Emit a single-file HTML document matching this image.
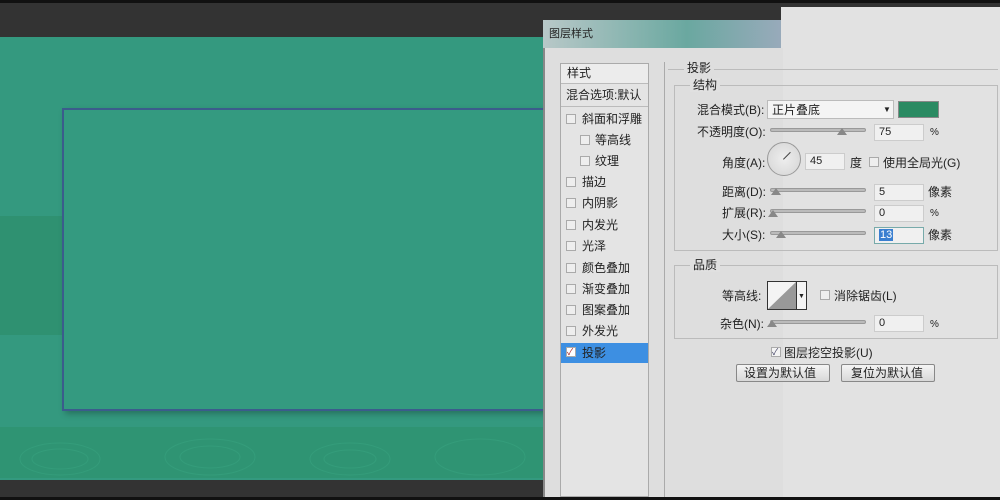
<!DOCTYPE html>
<html><head><meta charset="utf-8"><style>
*{margin:0;padding:0;box-sizing:border-box}
body{width:1000px;height:500px;overflow:hidden;background:#111;position:relative;font-family:"Liberation Sans","Noto Sans CJK SC",sans-serif;font-size:12px;color:#222}
.a{position:absolute}
.t{position:absolute;white-space:nowrap;font-size:12px;line-height:14px}
.cb{position:absolute;width:10px;height:10px;border:1px solid #aaa;background:#eee}
.slider{position:absolute;height:4px;background:#bbb;border:1px solid #999;border-radius:2px}
.inp{position:absolute;height:17px;background:#f0f0f0;border:1px solid #ccc;font-size:11px;padding-left:4px;line-height:15px}
.thumb{position:absolute;width:0;height:0;border-left:5px solid transparent;border-right:5px solid transparent;border-bottom:7px solid #888}
</style></head><body>
<div class="a" style="left:0;top:3px;width:1000px;height:34px;background:#333"></div>
<div class="a" style="left:0;top:37px;width:545px;height:443px;background:#34997f"></div>
<div class="a" style="left:0;top:216px;width:62px;height:119px;background:#2f9171"></div>
<div class="a" style="left:0;top:427px;width:545px;height:51px;background:#2f9473"></div>
<svg class="a" style="left:0;top:427px" width="545" height="51"><g fill="none" stroke="#3aa582" stroke-width="1" opacity=".5">
<ellipse cx="60" cy="32" rx="40" ry="16"/><ellipse cx="60" cy="32" rx="28" ry="10"/><ellipse cx="210" cy="30" rx="45" ry="18"/><ellipse cx="210" cy="30" rx="30" ry="11"/><ellipse cx="350" cy="32" rx="40" ry="16"/><ellipse cx="350" cy="32" rx="26" ry="9"/><ellipse cx="480" cy="30" rx="45" ry="18"/></g></svg>
<div class="a" style="left:0;top:480px;width:545px;height:17px;background:#333"></div>
<div class="a" style="left:62px;top:108px;width:484px;height:303px;border:2px solid #3b5c8c;border-right:none;background:#349a80;box-shadow:3px 3px 6px rgba(0,0,0,.25)"></div>
<div class="a" style="left:543px;top:20px;width:457px;height:477px;background:#dedede;border-left:2px solid #888"></div>
<div class="a" style="left:543px;top:20px;width:240px;height:28px;background:linear-gradient(90deg,#b8c8c8,#6aa8a0 60%,#9ab)"></div>
<div class="t" style="left:549px;top:27px;font-size:11px">图层样式</div>
<div class="a" style="left:781px;top:7px;width:219px;height:490px;background:#e2e2e2"></div>
<div class="a" style="left:548px;top:48px;width:235px;height:449px;background:#dedede"></div>
<div class="a" style="left:560px;top:63px;width:89px;height:434px;background:#e4e4e4;border:1px solid #aaa"></div>
<div class="a" style="left:561px;top:64px;width:87px;height:20px;background:#ececec;border-bottom:1px solid #bbb"></div>
<div class="t" style="left:567px;top:66px">样式</div>
<div class="a" style="left:561px;top:85px;width:87px;height:22px;border-bottom:1px solid #bbb"></div>
<div class="t" style="left:566px;top:88px">混合选项:默认</div>
<div class="cb" style="left:566px;top:114px"></div><div class="t" style="left:582px;top:112px">斜面和浮雕</div>
<div class="cb" style="left:580px;top:135px"></div><div class="t" style="left:595px;top:133px">等高线</div>
<div class="cb" style="left:580px;top:156px"></div><div class="t" style="left:595px;top:154px">纹理</div>
<div class="cb" style="left:566px;top:177px"></div><div class="t" style="left:582px;top:175px">描边</div>
<div class="cb" style="left:566px;top:198px"></div><div class="t" style="left:582px;top:196px">内阴影</div>
<div class="cb" style="left:566px;top:220px"></div><div class="t" style="left:582px;top:218px">内发光</div>
<div class="cb" style="left:566px;top:241px"></div><div class="t" style="left:582px;top:239px">光泽</div>
<div class="cb" style="left:566px;top:263px"></div><div class="t" style="left:582px;top:261px">颜色叠加</div>
<div class="cb" style="left:566px;top:284px"></div><div class="t" style="left:582px;top:282px">渐变叠加</div>
<div class="cb" style="left:566px;top:305px"></div><div class="t" style="left:582px;top:303px">图案叠加</div>
<div class="cb" style="left:566px;top:326px"></div><div class="t" style="left:582px;top:324px">外发光</div>
<div class="a" style="left:561px;top:343px;width:87px;height:20px;background:#3d8fe2"></div>
<div class="cb" style="left:566px;top:347px;background:#fff;font-size:9px;line-height:8px;color:#a22">✓</div><div class="t" style="left:582px;top:346px">投影</div>
<div class="a" style="left:664px;top:62px;width:1px;height:435px;background:#aaa"></div>
<div class="a" style="left:668px;top:69px;width:330px;height:1px;background:#bbb"></div>
<div class="t" style="left:684px;top:61px;background:#dedede;padding:0 3px">投影</div>
<div class="a" style="left:674px;top:85px;width:324px;height:166px;border:1px solid #bbb"></div>
<div class="t" style="left:690px;top:78px;background:#e0e0e0;padding:0 3px">结构</div>
<div class="t" style="left:697px;top:103px">混合模式(B):</div>
<div class="a" style="left:767px;top:100px;width:127px;height:19px;background:#f4f4f4;border:1px solid #bbb"></div>
<div class="t" style="left:772px;top:103px">正片叠底</div><div class="t" style="left:883px;top:103px;font-size:8px">▼</div>
<div class="a" style="left:898px;top:101px;width:41px;height:17px;background:#2a8a62;border:1px solid #888"></div>
<div class="t" style="left:697px;top:125px">不透明度(O):</div>
<div class="slider" style="left:770px;top:128px;width:96px"></div><div class="thumb" style="left:837px;top:128px"></div>
<div class="inp" style="left:874px;top:124px;width:50px">75</div><div class="t" style="left:930px;top:126px;font-size:10px">%</div>
<div class="t" style="left:722px;top:156px">角度(A):</div>
<div class="a" style="left:767px;top:142px;width:34px;height:34px;border-radius:50%;border:1px solid #999;background:radial-gradient(#eee,#d4d4d4)"></div>
<div class="a" style="left:783px;top:159px;width:10px;height:1px;background:#444;transform:rotate(-45deg);transform-origin:0 0"></div>
<div class="inp" style="left:805px;top:153px;width:40px">45</div><div class="t" style="left:850px;top:156px">度</div>
<div class="cb" style="left:869px;top:157px"></div><div class="t" style="left:883px;top:156px">使用全局光(G)</div>
<div class="t" style="left:722px;top:185px">距离(D):</div>
<div class="slider" style="left:770px;top:188px;width:96px"></div><div class="thumb" style="left:771px;top:188px"></div>
<div class="inp" style="left:874px;top:184px;width:50px">5</div><div class="t" style="left:928px;top:185px">像素</div>
<div class="t" style="left:722px;top:206px">扩展(R):</div>
<div class="slider" style="left:770px;top:209px;width:96px"></div><div class="thumb" style="left:768px;top:210px"></div>
<div class="inp" style="left:874px;top:205px;width:50px">0</div><div class="t" style="left:930px;top:207px;font-size:10px">%</div>
<div class="t" style="left:722px;top:228px">大小(S):</div>
<div class="slider" style="left:770px;top:231px;width:96px"></div><div class="thumb" style="left:776px;top:231px"></div>
<div class="inp" style="left:874px;top:227px;width:50px;border-color:#7aa"><span style="background:#3a7fd0;color:#fff;padding:0 1px">13</span></div><div class="t" style="left:928px;top:228px">像素</div>
<div class="a" style="left:674px;top:265px;width:324px;height:74px;border:1px solid #bbb"></div>
<div class="t" style="left:690px;top:258px;background:#e0e0e0;padding:0 3px">品质</div>
<div class="t" style="left:722px;top:289px">等高线:</div>
<div class="a" style="left:767px;top:281px;width:40px;height:29px;border:1px solid #333;background:#f4f4f4"></div>
<svg class="a" style="left:768px;top:282px" width="28" height="27"><polygon points="0,27 28,0 28,27" fill="#999"/></svg>
<div class="a" style="left:796px;top:282px;width:1px;height:27px;background:#333"></div>
<div class="t" style="left:798px;top:290px;font-size:7px">▼</div>
<div class="cb" style="left:820px;top:290px"></div><div class="t" style="left:834px;top:289px">消除锯齿(L)</div>
<div class="t" style="left:720px;top:317px">杂色(N):</div>
<div class="slider" style="left:770px;top:320px;width:96px"></div><div class="thumb" style="left:767px;top:320px"></div>
<div class="inp" style="left:874px;top:315px;width:50px">0</div><div class="t" style="left:930px;top:318px;font-size:10px">%</div>
<div class="cb" style="left:771px;top:347px;background:#f4f4f4;font-size:9px;line-height:8px;color:#446">✓</div><div class="t" style="left:784px;top:346px">图层挖空投影(U)</div>
<div class="a" style="left:736px;top:364px;width:94px;height:18px;border:1px solid #888;border-radius:2px;background:linear-gradient(#f4f4f4,#d8d8d8)"></div>
<div class="t" style="left:744px;top:366px">设置为默认值</div>
<div class="a" style="left:841px;top:364px;width:94px;height:18px;border:1px solid #888;border-radius:2px;background:linear-gradient(#f4f4f4,#d8d8d8)"></div>
<div class="t" style="left:851px;top:366px">复位为默认值</div>
<div class="a" style="left:0;top:497px;width:1000px;height:3px;background:#111"></div>
</body></html>
